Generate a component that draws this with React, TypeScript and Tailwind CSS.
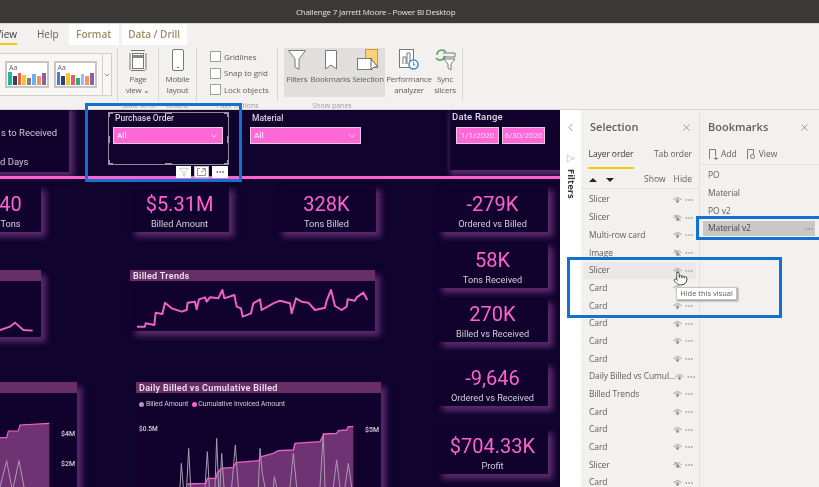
import React from 'react';
import { ChevronDown, ChevronLeft, Funnel, MoreHorizontal, Pointer, X } from 'lucide-react';

const themeBars = [
    ['bg-[#1fb3a0]', 'bg-[#3b4250]', 'bg-[#f0604d]', 'bg-[#f4c430]', 'bg-[#7a7f87]', 'bg-[#6bb3e8]', 'bg-[#f2975a]', 'bg-[#8d5fa8]'],
    ['bg-[#3f7fd6]', 'bg-[#2e3f70]', 'bg-[#f4c430]', 'bg-[#e0605a]', 'bg-[#2fa98c]', 'bg-[#8cc4ee]', 'bg-[#f2975a]', 'bg-[#8d5fa8]'],
];
const barHeights = ['h-[13px]', 'h-[9px]', 'h-[12px]', 'h-[10px]', 'h-[7px]', 'h-[11px]', 'h-[9px]', 'h-[12px]'];

const layers = [
    { name: 'Slicer' },
    { name: 'Slicer', hidden: true },
    { name: 'Multi-row card' },
    { name: 'Image', hidden: true },
    { name: 'Slicer', active: true },
    { name: 'Card' },
    { name: 'Card' },
    { name: 'Card' },
    { name: 'Card' },
    { name: 'Card' },
    { name: 'Daily Billed vs Cumul...' },
    { name: 'Billed Trends' },
    { name: 'Card' },
    { name: 'Card' },
    { name: 'Card' },
    { name: 'Slicer', hidden: true },
    { name: 'Card' },
];

const glow = 'shadow-[5px_5px_6px_#5b2a6e]';

const Eye = ({ off }: { off?: boolean }) => (
    <svg width="9" height="8" viewBox="0 0 18 16" fill="none" stroke="#8a8886" strokeWidth="1.6">
        <path d="M1 8 C5 2 13 2 17 8" />
        <path d="M5 9 C7 6 11 6 13 9" />
        <circle cx="9" cy="11" r="2" fill="#8a8886" />
        {off && <path d="M3 2 L15 14" strokeWidth="2" />}
    </svg>
);

const Dots = () => <MoreHorizontal size={10} strokeWidth={1.5} className="text-[#8a8886]" />;

const RibbonButton = ({ lines, width, children }: { lines: string[]; width: string; children: React.ReactNode }) => (
    <div className={`${width} flex flex-col items-center text-[8px] leading-[11px] tracking-[-0.25px] text-[#605e5c]`}>
        <div className="h-[23px] flex items-center justify-center mb-[2px]">{children}</div>
        {lines.map((l) => (
            <span key={l} className="whitespace-nowrap">{l}</span>
        ))}
    </div>
);

const Ribbon = () => (
    <div className="h-[86px] shrink-0 bg-[#f3f1f0] border-t border-[#d8d6d4] flex flex-col text-[#605e5c]">
        <div className="h-[21px] shrink-0 flex items-end text-[10px]">
            <div className="w-[17px] h-[21px] flex flex-col items-end justify-center relative text-[#3b3a39]">
                View
                <span className="absolute bottom-0 left-0 right-0 h-[2px] bg-[#f2c811]" />
            </div>
            <span className="ml-[20px] h-[21px] leading-[21px]">Help</span>
            <span className="ml-[10px] w-[50px] h-[21px] bg-white text-center leading-[21px] font-semibold text-[#a08a5e]">Format</span>
            <span className="ml-[3px] w-[65px] h-[21px] bg-white text-center leading-[21px] font-semibold text-[#a08a5e]">Data / Drill</span>
        </div>
        <div className="flex h-[53px] shrink-0 mt-[3px]">
            <div className="w-[118px] border-r border-[#d8d6d4] pr-[5px] pt-[5px]">
                <div className="h-[43px] flex items-center gap-[5px] bg-[#f8f7f6] border-y border-r border-[#d2d0ce] pl-[5px]">
                    {themeBars.map((bars, i) => (
                        <div key={i} className="w-[45px] h-[27px] border-2 border-[#c8c6c4] bg-white px-[1px] relative flex items-end gap-[1px] overflow-hidden">
                            <span className="absolute left-[2px] top-0 text-[7px] leading-[9px] text-[#605e5c]">Aa</span>
                            {bars.map((c, j) => (
                                <span key={j} className={`${c} ${barHeights[j]} flex-1 mb-[1px]`} />
                            ))}
                        </div>
                    ))}
                    <div className="flex-1 h-full flex items-center justify-center border-l border-[#d2d0ce]">
                        <ChevronDown size={8} />
                    </div>
                </div>
            </div>
            <div className="w-[41px] border-r border-[#d8d6d4] flex justify-center">
                <RibbonButton lines={['Page', 'view ⌄']} width="w-[40px]">
                    <svg width="20" height="22" viewBox="0 0 20 22" fill="none" stroke="#7a7876">
                        <path d="M3 1.5H17M2 4V21M18 4V21M3 21.5H17" />
                        <rect x="4.5" y="4.5" width="11" height="15" fill="#fff" />
                        <rect x="5" y="6" width="10" height="3" fill="#8a8886" stroke="none" />
                    </svg>
                </RibbonButton>
            </div>
            <div className="w-[38px] border-r border-[#d8d6d4] flex justify-center">
                <RibbonButton lines={['Mobile', 'layout']} width="w-[36px]">
                    <svg width="12" height="22" viewBox="0 0 12 22" fill="#fff" stroke="#7a7876">
                        <rect x="0.5" y="0.5" width="11" height="21" rx="1.5" />
                        <path d="M5 18.5H7" />
                    </svg>
                </RibbonButton>
            </div>
            <div className="w-[81px] border-r border-[#d8d6d4] pl-[13px] pt-[3px] flex flex-col gap-[5.5px] text-[8px] tracking-[-0.1px]">
                {['Gridlines', 'Snap to grid', 'Lock objects'].map((l) => (
                    <div key={l} className="flex items-center gap-[3px] h-[11px]">
                        <span className="w-[11px] h-[11px] bg-white border border-[#a19f9d]" />
                        <span>{l}</span>
                    </div>
                ))}
            </div>
            <div className="w-[185px] border-r border-[#d8d6d4] pl-[6px] flex items-start">
                <div className="flex h-[49px] bg-[#e1dfdd] w-[101px]">
                    <RibbonButton lines={['Filters']} width="w-[26px]">
                        <svg width="18" height="20" viewBox="0 0 18 20" fill="#fff" stroke="#7a7876">
                            <path d="M0.5 0.5H17.5L11 9V19.5L7 17V9Z" />
                        </svg>
                    </RibbonButton>
                    <RibbonButton lines={['Bookmarks']} width="w-[41px]">
                        <svg width="12" height="20" viewBox="0 0 12 20" fill="#fff" stroke="#7a7876">
                            <path d="M0.5 0.5H11.5V19L6 15L0.5 19Z" />
                        </svg>
                    </RibbonButton>
                    <RibbonButton lines={['Selection']} width="w-[34px]">
                        <svg width="22" height="22" viewBox="0 0 22 22">
                            <rect x="8.5" y="0.5" width="12" height="18" fill="#fbd27a" stroke="#e8912c" />
                            <rect x="0.5" y="9.5" width="14" height="11" fill="#fff" stroke="#7a7876" />
                            <path d="M14 10V21L17 18L21 18Z" fill="#fff" stroke="#605e5c" />
                        </svg>
                    </RibbonButton>
                </div>
                <RibbonButton lines={['Performance', 'analyzer']} width="w-[48px]">
                    <svg width="20" height="21" viewBox="0 0 20 21" fill="#fff" stroke="#7a7876">
                        <rect x="0.5" y="0.5" width="14" height="18" />
                        <path d="M4 15V8H7V15M8 15V4H11V13" fill="none" />
                        <circle cx="14.5" cy="15.5" r="4.5" stroke="#2f8fd8" strokeWidth="1.5" />
                        <path d="M14.5 13V16H16.5" stroke="#2f8fd8" fill="none" />
                    </svg>
                </RibbonButton>
                <RibbonButton lines={['Sync', 'slicers']} width="w-[24px]">
                    <svg width="22" height="22" viewBox="0 0 22 22" fill="none" stroke="#7a7876">
                        <path d="M3 6A5 5 0 0 1 12 3M11 7A5 5 0 0 1 2 9" stroke="#57a55a" strokeWidth="1.5" />
                        <path d="M9 4H21V8H9" />
                        <path d="M10 10H21L17 15V21L14 19V15Z" fill="#fff" />
                    </svg>
                </RibbonButton>
            </div>
        </div>
        <div className="flex h-[8px] text-[7px] leading-[10px] text-[#a19f9d]">
            <span className="w-[118px]" />
            <span className="w-[41px] text-center">Scale to fit</span>
            <span className="w-[38px] text-center">Mobile</span>
            <span className="w-[81px] text-center">Page options</span>
            <span className="w-[108px] text-center">Show panes</span>
        </div>
    </div>
);

const Card = ({ pos, value, label }: { pos: string; value: string; label: string }) => (
    <div className={`absolute ${pos} ${glow} bg-[#10022c] flex flex-col items-center justify-end pb-[1px]`}>
        <span className="text-[#ff62cf] text-[20px] leading-[24px]">{value}</span>
        <span className="text-[#d5cfdc] text-[9.2px] leading-[15px] whitespace-nowrap">{label}</span>
    </div>
);

const Dropdown = ({ pos }: { pos: string }) => (
    <div className={`absolute ${pos} h-[17px] bg-[#ff68d6] border border-[#e9c8e4] flex items-center justify-between pl-[3px] pr-[3px] text-[#fbdcf4] text-[8px] font-semibold`}>
        All
        <ChevronDown size={10} className="text-[#f8e8f5]" />
    </div>
);

const ChartTitle = ({ children }: { children: React.ReactNode }) => (
    <div className="h-[11px] bg-[#672e68] text-[#ece2ec] text-[9px] leading-[12px] font-semibold pl-[3px] tracking-[0.3px] whitespace-nowrap">
        {children}
    </div>
);

const Canvas = () => (
    <div className="w-[560px] h-full relative bg-[#10032e] overflow-hidden font-['Roboto',sans-serif]">
        {/* top row */}
        <div className={`absolute left-[-10px] top-[-6px] w-[79px] h-[68px] bg-[#10022c] ${glow} text-[#cfc8d6] text-[9.5px]`}>
            <span className="absolute left-[11px] top-[22px] whitespace-nowrap">s to Received</span>
            <span className="absolute left-[10px] top-[51px] whitespace-nowrap">d Days</span>
        </div>
        <span className="absolute left-[115px] top-0 text-[#d8d2de] text-[8.5px] leading-[17px] font-medium">Purchase Order</span>
        <Dropdown pos="left-[113px] top-[17px] w-[110px]" />
        <span className="absolute left-[252px] top-0 text-[#d8d2de] text-[8.5px] leading-[17px] font-medium">Material</span>
        <Dropdown pos="left-[250px] top-[17px] w-[111px]" />
        <div className="absolute left-[450px] top-[-6px] w-[120px] h-[66px] bg-[#10022c] shadow-[0_5px_5px_#5b2a6e]" />
        <span className="absolute left-[452px] top-[-1px] text-[#e0dae6] text-[9.5px] leading-[15px] font-medium tracking-[0.2px]">Date Range</span>
        <div className="absolute left-[456px] top-[17px] w-[43px] h-[17px] bg-[#ff68d6] border border-[#e9c8e4] text-[#fbdcf4] text-[8px] leading-[15px] text-center">1/1/2020</div>
        <div className="absolute left-[502px] top-[17px] w-[43px] h-[17px] bg-[#ff68d6] border border-[#e9c8e4] text-[#fbdcf4] text-[8px] leading-[15px] text-center">6/30/2020</div>
        <div className="absolute left-0 top-[66px] w-full h-[3px] bg-[#ff62cf]" />

        {/* cards */}
        <Card pos="left-[-20px] top-[75px] w-[61px] h-[47px]" value="40" label="Tons" />
        <Card pos="left-[130px] top-[75px] w-[99px] h-[47px]" value="$5.31M" label="Billed Amount" />
        <Card pos="left-[277px] top-[75px] w-[99px] h-[47px]" value="328K" label="Tons Billed" />
        <Card pos="left-[437px] top-[75px] w-[111px] h-[47px]" value="-279K" label="Ordered vs Billed" />
        <Card pos="left-[437px] top-[132px] w-[111px] h-[46px]" value="58K" label="Tons Received" />
        <Card pos="left-[437px] top-[188px] w-[111px] h-[44px]" value="270K" label="Billed vs Received" />
        <Card pos="left-[437px] top-[252px] w-[111px] h-[44px]" value="-9,646" label="Ordered vs Received" />
        <Card pos="left-[437px] top-[318px] w-[111px] h-[46px]" value="$704.33K" label="Profit" />

        {/* trend charts */}
        <div className={`absolute left-[-20px] top-[160px] w-[61px] h-[67px] ${glow} bg-[#10022c]`}>
            <ChartTitle>&nbsp;</ChartTitle>
            <svg width="61" height="56" viewBox="-60 303 183 168" fill="none" stroke="#f062c8" strokeWidth="5.5">
                <path d="M-60 460 L0 450 L30 440 L45 428 L70 450 L98 452" />
            </svg>
        </div>
        <div className={`absolute left-[130px] top-[160px] w-[245px] h-[61px] ${glow} bg-[#10022c]`}>
            <ChartTitle>Billed Trends</ChartTitle>
            <svg width="245" height="50" viewBox="15 63 735 150" fill="none" stroke="#f062c8" strokeWidth="6" strokeLinejoin="round">
                <path d="M36 200L60 200L62 190L88 195L92 158L112 162L120 128L140 145L170 155L185 150L188 128L210 125L215 148L222 118L240 112L245 125L255 112L280 115L292 90L298 115L328 105L335 140L348 145L353 170L378 160L385 130L405 118L410 150L445 130L465 122L495 130L500 160L513 115L530 125L550 128L570 150L600 143L605 122L618 90L630 138L650 150L665 140L668 118L690 122L695 112L715 98L727 120" />
            </svg>
        </div>

        {/* bottom charts */}
        <div className={`absolute left-[-20px] top-[272px] w-[97px] h-[130px] ${glow} bg-[#10022c]`}>
            <ChartTitle>&nbsp;</ChartTitle>
            <svg width="97" height="94" viewBox="-60 69 291 282" fill="none" className="relative">
                <path d="M-60 215L0 203L20 203L25 183L55 183L60 165L148 160V351H-60Z" fill="#6f3374" />
                <path d="M-60 215L0 203L20 203L25 183L55 183L60 165L148 160" stroke="#f062c8" strokeWidth="3.5" />
                <path d="M0 351L20 272L35 351M40 351L57 272L72 351" stroke="#a99cb0" strokeWidth="3" />
            </svg>
            <span className="absolute left-[81px] top-[47px] text-[#cfc8d6] text-[7px] font-semibold">$4M</span>
            <span className="absolute left-[81px] top-[77px] text-[#cfc8d6] text-[7px] font-semibold">$2M</span>
        </div>
        <div className={`absolute left-[136px] top-[272px] w-[245px] h-[130px] ${glow} bg-[#10022c]`}>
            <ChartTitle>Daily Billed vs Cumulative Billed</ChartTitle>
            <div className="flex items-center h-[23px] pl-[3px] text-[#cfc8d6] text-[7px] tracking-[-0.1px] whitespace-nowrap">
                <span className="w-[5px] h-[5px] rounded-full bg-[#a99cb0] mr-[2px]" />
                Billed Amount
                <span className="w-[5px] h-[5px] rounded-full bg-[#ff62cf] ml-[4px] mr-[1px]" />
                Cumulative Invoiced Amount
            </div>
            <svg width="245" height="71" viewBox="18 78 735 213" fill="none">
                <path d="M172 282L228 280L232 265L258 265L262 248L275 235L310 232L318 218L385 212L395 200L430 190L445 182L490 180L495 160L570 155L582 132L620 130L625 122L650 120L655 110L670 110V291H172Z" fill="#6f3374" />
                <path d="M150 291L154 220L160 291M170 291L176 175L182 291M225 291L232 185L238 291M255 291L260 145L266 291M270 291L275 190L282 291M305 291L316 165L325 291M385 291L390 175L397 250L405 291M430 291L433 260L440 291M480 291L490 190L500 291M570 291L580 130L585 291M610 291L620 210L630 291M645 291L655 220L665 291" stroke="#a99cb0" strokeWidth="3" />
                <path d="M172 282L228 280L232 265L258 265L262 248L275 235L310 232L318 218L385 212L395 200L430 190L445 182L490 180L495 160L570 155L582 132L620 130L625 122L650 120L655 110L670 110" stroke="#f062c8" strokeWidth="4" />
            </svg>
            <span className="absolute left-[3px] top-[43px] text-[#cfc8d6] text-[6.5px] font-semibold">$0.5M</span>
            <span className="absolute left-[229px] top-[43px] text-[#cfc8d6] text-[7px] font-semibold">$5M</span>
        </div>

        {/* selection frame of the active slicer */}
        <div className="absolute left-[108px] top-[2px] w-[121px] h-[53px] border border-[#8f8a96]">
            <span className="absolute -left-[1px] -top-[1px] w-[5px] h-[5px] border-l-2 border-t-2 border-[#9a96a0]" />
            <span className="absolute -right-[1px] -top-[1px] w-[5px] h-[5px] border-r-2 border-t-2 border-[#9a96a0]" />
            <span className="absolute -left-[1px] -bottom-[1px] w-[5px] h-[5px] border-l-2 border-b-2 border-[#9a96a0]" />
            <span className="absolute -right-[1px] -bottom-[1px] w-[5px] h-[5px] border-r-2 border-b-2 border-[#9a96a0]" />
            <span className="absolute left-[56px] -top-[1px] w-[7px] h-[2px] bg-[#9a96a0]" />
            <span className="absolute left-[56px] -bottom-[1px] w-[7px] h-[2px] bg-[#9a96a0]" />
            <span className="absolute -left-[1px] top-[23px] w-[2px] h-[7px] bg-[#9a96a0]" />
            <span className="absolute -right-[1px] top-[23px] w-[2px] h-[7px] bg-[#9a96a0]" />
        </div>
        <div className="absolute left-[176px] top-[56px] flex gap-[3px] h-[12px]">
            <div className="w-[15px] h-full bg-white flex items-center justify-center">
                <Funnel size={10} strokeWidth={1} className="text-[#7a7876]" />
            </div>
            <div className="w-[15px] h-full bg-white border border-[#c8c6c4] flex items-center justify-center">
                <svg width="9" height="8" viewBox="0 0 9 8" fill="none" stroke="#7a7876" strokeWidth="0.8">
                    <path d="M3 .5H.5V7.5H8.5V5M5 .5H8.5V4M8 1L4 4.5" />
                </svg>
            </div>
            <div className="w-[16px] h-full bg-white flex items-center justify-center">
                <MoreHorizontal size={10} className="text-[#605e5c]" />
            </div>
        </div>
    </div>
);

const FiltersStrip = () => (
    <div className="w-[21px] h-full shrink-0 bg-white flex flex-col items-center">
        <ChevronLeft size={13} strokeWidth={1.2} className="mt-[11px] text-[#605e5c]" />
        <Funnel size={9} strokeWidth={1} className="mt-[20px] text-[#8a8886] -rotate-90" />
        <span className="mt-[6px] [writing-mode:vertical-rl] text-[9.5px] leading-[12px] font-bold text-[#3b3a39]">Filters</span>
    </div>
);

const SelectionPanel = () => (
    <div className="w-[119px] h-full shrink-0 bg-[#f3f1f0] border-r border-[#e3e1df] flex flex-col text-[#605e5c]">
        <div className="h-[34px] shrink-0 flex items-center justify-between pl-[9px] pr-[7px] text-[11px] font-semibold">
            Selection
            <X size={11} strokeWidth={1.3} />
        </div>
        <div className="h-[25px] shrink-0 flex text-[8.5px] tracking-[-0.1px] pl-[7px]">
            <div className="w-[46px] text-center border-b-2 border-[#f2c811] leading-[20px] text-[#3b3a39]">Layer order</div>
            <div className="ml-[20px] leading-[20px]">Tab order</div>
        </div>
        <div className="h-[20px] shrink-0 flex items-center justify-between px-[7px] pt-[2px] border-b border-[#e3e1df] text-[8.5px]">
            <div className="flex items-center gap-[4px] pl-[1px]">
                <span className="w-0 h-0 border-x-[4px] border-x-transparent border-b-[4px] border-b-[#252423]" />
                <span className="w-0 h-0 border-x-[4px] border-x-transparent border-t-[4px] border-t-[#252423] ml-[5px]" />
            </div>
            <div className="flex gap-[8px]">
                <span>Show</span>
                <span>Hide</span>
            </div>
        </div>
        <div className="flex flex-col min-h-0 overflow-hidden pt-[2px]">
            {layers.map((l, i) => (
                <div key={i} className={`h-[17.7px] shrink-0 flex items-center justify-between ml-[3px] mr-[3px] pl-[5px] pr-[2px] text-[8.5px] tracking-[-0.1px] ${l.active ? 'bg-[#ebe9e8]' : ''}`}>
                    <span className="whitespace-nowrap">{l.name}</span>
                    <div className="flex items-center gap-[2px] shrink-0">
                        <Eye off={l.hidden} />
                        <Dots />
                    </div>
                </div>
            ))}
        </div>
    </div>
);

const BookmarksPanel = () => (
    <div className="flex-1 h-full bg-[#f3f1f0] flex flex-col text-[#605e5c]">
        <div className="h-[34px] shrink-0 flex items-center justify-between pl-[8px] pr-[9px] text-[11px] font-semibold">
            Bookmarks
            <X size={11} strokeWidth={1.3} />
        </div>
        <div className="h-[21px] shrink-0 flex items-center pl-[9px] border-b border-[#e3e1df] text-[8.5px]">
            <svg width="9" height="11" viewBox="0 0 9 11" fill="none" stroke="#605e5c" strokeWidth="0.8">
                <path d="M.5 10V.5H6.5V7M5 9.5H9M7 7.5V11" />
            </svg>
            <span className="ml-[3px]">Add</span>
            <svg width="9" height="11" viewBox="0 0 9 11" fill="none" stroke="#605e5c" strokeWidth="0.8" className="ml-[10px]">
                <path d="M.5 10V.5H6.5V5" />
                <circle cx="5.5" cy="7.5" r="2" />
            </svg>
            <span className="ml-[3px]">View</span>
        </div>
        <div className="flex flex-col pt-[2px] text-[8.5px] tracking-[-0.1px]">
            {['PO', 'Material', 'PO v2'].map((b) => (
                <div key={b} className="h-[17.7px] flex items-center pl-[8px]">{b}</div>
            ))}
            <div className="h-[15px] mt-[1px] ml-[3px] mr-[4px] bg-[#cbc7c7] flex items-center justify-between pl-[5px] pr-[1px] text-[#4a4847]">
                Material v2
                <Dots />
            </div>
        </div>
    </div>
);

export default function App() {
    return (
        <div className="w-[819px] h-[487px] relative overflow-hidden flex flex-col bg-[#f3f1f0] font-['Open_Sans',sans-serif] blur-[0.4px]">
            <div className="h-[23px] shrink-0 bg-[#3b3a39] flex items-center pl-[296px] text-[#e6e4e2] text-[8px] tracking-[-0.2px]">
                Challenge 7 Jarrett Moore - Power BI Desktop
            </div>
            <Ribbon />
            <div className="flex-1 min-h-0 flex border-t border-[#d8d6d4]">
                <Canvas />
                <FiltersStrip />
                <SelectionPanel />
                <BookmarksPanel />
            </div>

            {/* tutorial highlight boxes */}
            <div className="absolute left-[85px] top-[103px] w-[157px] h-[79px] border-[3px] border-[#1272d0]" />
            <div className="absolute left-[696px] top-[216px] w-[123px] h-[24px] border-[3px] border-r-0 border-[#1272d0]" />
            <div className="absolute left-[567px] top-[257px] w-[215px] h-[61px] border-[3px] border-[#1272d0]" />

            {/* tooltip and cursor */}
            <div className="absolute left-[676px] top-[287px] w-[61px] h-[13px] bg-white border border-[#c8c6c4] shadow-[1px_1px_2px_#8a8886] text-[7.5px] leading-[11px] text-center text-[#605e5c] whitespace-nowrap">
                Hide this visual
            </div>
            <Pointer size={15} strokeWidth={1.3} className="absolute left-[673px] top-[271px] text-[#252423] fill-white" />
        </div>
    );
}
